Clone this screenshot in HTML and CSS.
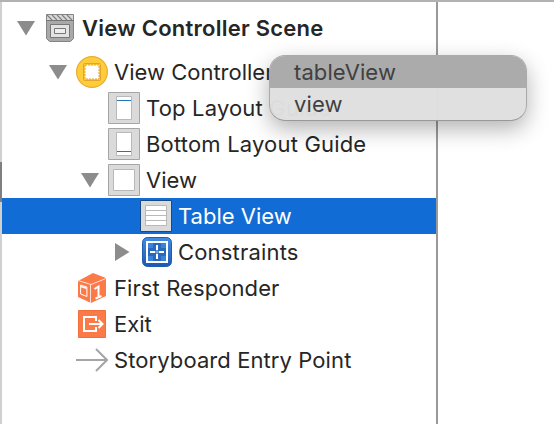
FILE: index.html
```html
<!DOCTYPE html>
<html lang="en">
<head>
<meta charset="utf-8">
<title>View Controller Scene</title>
<link rel="stylesheet" href="styles.css">
</head>
<body>
<div class="window">
  <div class="gutter"><div class="thumb"></div></div>
  <div class="outline">
    <div class="row header">
      <svg class="arrow" width="18" height="16"><path d="M0 1H18L9 15.500Z"/></svg>
      <svg class="icon" width="32" height="32" viewBox="0 0 32 32"><path d="M2.500 2.500h27v24l-3 3h-21l-3-3z" fill="#a9a9a9" stroke="#858585"/><path d="M3 3h26v5H3z" fill="#d8d8d8"/><path d="M3 3l5 5M8 3l5 5M13 3l5 5M18 3l5 5M23 3l5 5" stroke="#808080" stroke-width="1.200"/><path d="M2 8.500h28" stroke="#777"/><path d="M6.500 12.500h19v13h-19z" fill="#e4e1e4" stroke="#777"/><path d="M10.500 16.500h11v5h-11z" fill="#eee" stroke="#777"/></svg>
      <span class="label t-scene">View Controller Scene</span>
    </div>
    <div class="row d1">
      <svg class="arrow" width="18" height="16"><path d="M0 1H18L9 15.500Z"/></svg>
      <svg class="icon" width="32" height="32"><circle cx="16" cy="16" r="15.400" fill="#ffcd39" stroke="#e8ad32" stroke-width="1.200"/><rect x="7.500" y="7.500" width="17" height="17" rx="1" fill="#ffcd39" stroke="#e4a52d"/><path d="M9 9h14v14H9z" fill="#fff" stroke="#e4a52d" stroke-dasharray="2 1"/></svg>
      <span class="label">View Controller</span>
    </div>
    <div class="row d2">
      <svg class="icon" width="32" height="32"><path class="tile" d="M.5.5h31v31H.5z"/><path class="sheet" d="M8.500 4.500h15v23h-15z"/><path d="M9 8.500h14" stroke="#2275bd"/></svg>
      <span class="label t-guide">Top Layout Guide</span>
    </div>
    <div class="row d2">
      <svg class="icon" width="32" height="32"><path class="tile" d="M.5.5h31v31H.5z"/><path class="sheet" d="M8.500 4.500h15v23h-15z"/><path d="M9 23.500h14" stroke="#2275bd"/></svg>
      <span class="label t-guide">Bottom Layout Guide</span>
    </div>
    <div class="row d3">
      <svg class="arrow" width="18" height="16"><path d="M0 1H18L9 15.500Z"/></svg>
      <svg class="icon" width="32" height="32"><path class="tile" d="M.5.5h31v31H.5z"/><path class="sheet" d="M5.500 5.500h21v21h-21z"/></svg>
      <span class="label">View</span>
    </div>
    <div class="row d4 selected">
      <svg class="icon" width="32" height="32"><path class="tile" d="M.5.5h31v31H.5z"/><path class="sheet" d="M5.500 5.500h21v20h-21zM6 10.500h20M6 15.500h20M6 20.500h20"/></svg>
      <span class="label">Table View</span>
    </div>
    <div class="row d5">
      <svg class="arrow" width="18" height="18"><path d="M2 0L16.500 9L2 18Z"/></svg>
      <svg class="icon" width="32" height="32"><defs><linearGradient id="blue" x2="0" y2="1"><stop stop-color="#438ce2"/><stop offset="1" stop-color="#1c58b2"/></linearGradient></defs><rect x="2.500" y="1.500" width="29" height="29" rx="5" fill="url(#blue)" stroke="#1f5db5"/><path d="M7 6h20v20H7z" fill="#3a83d9" stroke="#fff" stroke-width="2"/><path d="M8 12h18v8H8zM13 7h8v18h-8z" fill="#2869bd"/><path d="M17 9v5M17 18v5M10 16h5M19 16h5" stroke="#fff" stroke-width="2"/><path d="M15 16h4M17 14v4" stroke="#8cb7ed"/></svg>
      <span class="label t-wide">Constraints</span>
    </div>
    <div class="row d1 leaf">
      <svg class="icon" width="32" height="32"><path d="M17 1L30 6v18l-15 7L2 25V9z" fill="#fc7a48"/><path d="M2 8.500l13 4L30 6.500M14.500 12.500V31" fill="none" stroke="#ffe3d7"/><path d="M4.600 13l6.300 2v9.500L4.600 22z" fill="none" stroke="#fff"/><path d="M5 14.500l5.500 1.800" stroke="#fff" stroke-width="1.500"/><path d="M18.500 17l4-2.500v11M19.500 26.500l6-2.500" fill="none" stroke="#fff" stroke-width="2"/></svg>
      <span class="label t-loose">First Responder</span>
    </div>
    <div class="row d1 leaf">
      <svg class="icon" width="32" height="32"><path d="M2.500 2.500h27v27h-27z" fill="#fc7a48" stroke="#ef6f3c"/><path d="M20 13V9H8v14h12v-4" fill="none" stroke="#fff" stroke-width="2"/><path d="M13 16h13M22.500 12l4 4-4 4" fill="none" stroke="#fff" stroke-width="2"/></svg>
      <span class="label">Exit</span>
    </div>
    <div class="row d1 leaf">
      <svg class="icon" width="32" height="32"><path d="M0 16h31M20 5l11 11-11 11" fill="none" stroke="#a5a5a5" stroke-width="2"/></svg>
      <span class="label t-loose">Storyboard Entry Point</span>
    </div>
  </div>
  <div class="canvas"></div>
</div>
<div class="menu">
  <div class="item active"><span class="t-menu">tableView</span></div>
  <div class="item"><span class="t-menu">view</span></div>
</div>
</body>
</html>
```
FILE: styles.css
```css
* { box-sizing: border-box; }
body {
  margin: 0;
  width: 554px;
  height: 424px;
  overflow: hidden;
  background: #fff;
  color: #262626;
  font: 22px/36px Inter, "Liberation Sans", sans-serif;
}
.window { display: flex; height: 424px; border-top: 2px solid #b2b2b2; }
.gutter { width: 2px; background: #d0d0d0; padding-top: 160px; }
.thumb { height: 40px; background: #7f7f7f; }
.outline { width: 434px; }
.canvas { flex: 1; border-left: 2px solid #999; }
.row { display: flex; align-items: center; height: 36px; white-space: nowrap; }
.header { height: 52px; padding-left: 15px; font-weight: 600; }
.d1 { padding-left: 47px; }
.d2 { padding-left: 106px; }
.d3 { padding-left: 79px; }
.d4 { padding-left: 138px; }
.d5 { padding-left: 111px; }
.leaf { padding-left: 74px; }
.selected { background: #116cd6; color: #fff; }
.arrow { flex: none; margin-right: 9px; fill: #8c8c8c; }
.icon { flex: none; margin-right: 6px; }
.tile { fill: #dadada; stroke: #a5a5a5; }
.selected .tile { stroke: #174a89; }
.sheet { fill: #fff; stroke: #b9b9b9; }
.t-scene { letter-spacing: .25px; }
.t-guide { letter-spacing: .18px; }
.t-wide { letter-spacing: .18px; }
.t-menu { letter-spacing: .1px; }
.t-loose { letter-spacing: .09px; }
.menu {
  position: absolute;
  left: 269px;
  top: 55px;
  width: 258px;
  height: 66px;
  border: 1px solid #aaa;
  border-bottom-color: #999;
  border-radius: 16px;
  overflow: hidden;
  background: rgba(223, 223, 223, .98);
  color: #404040;
  box-shadow: 0 8px 22px rgba(0, 0, 0, .3);
}
.item { height: 32px; line-height: 32px; padding-left: 24px; }
.active { background: #ababab; }
```
